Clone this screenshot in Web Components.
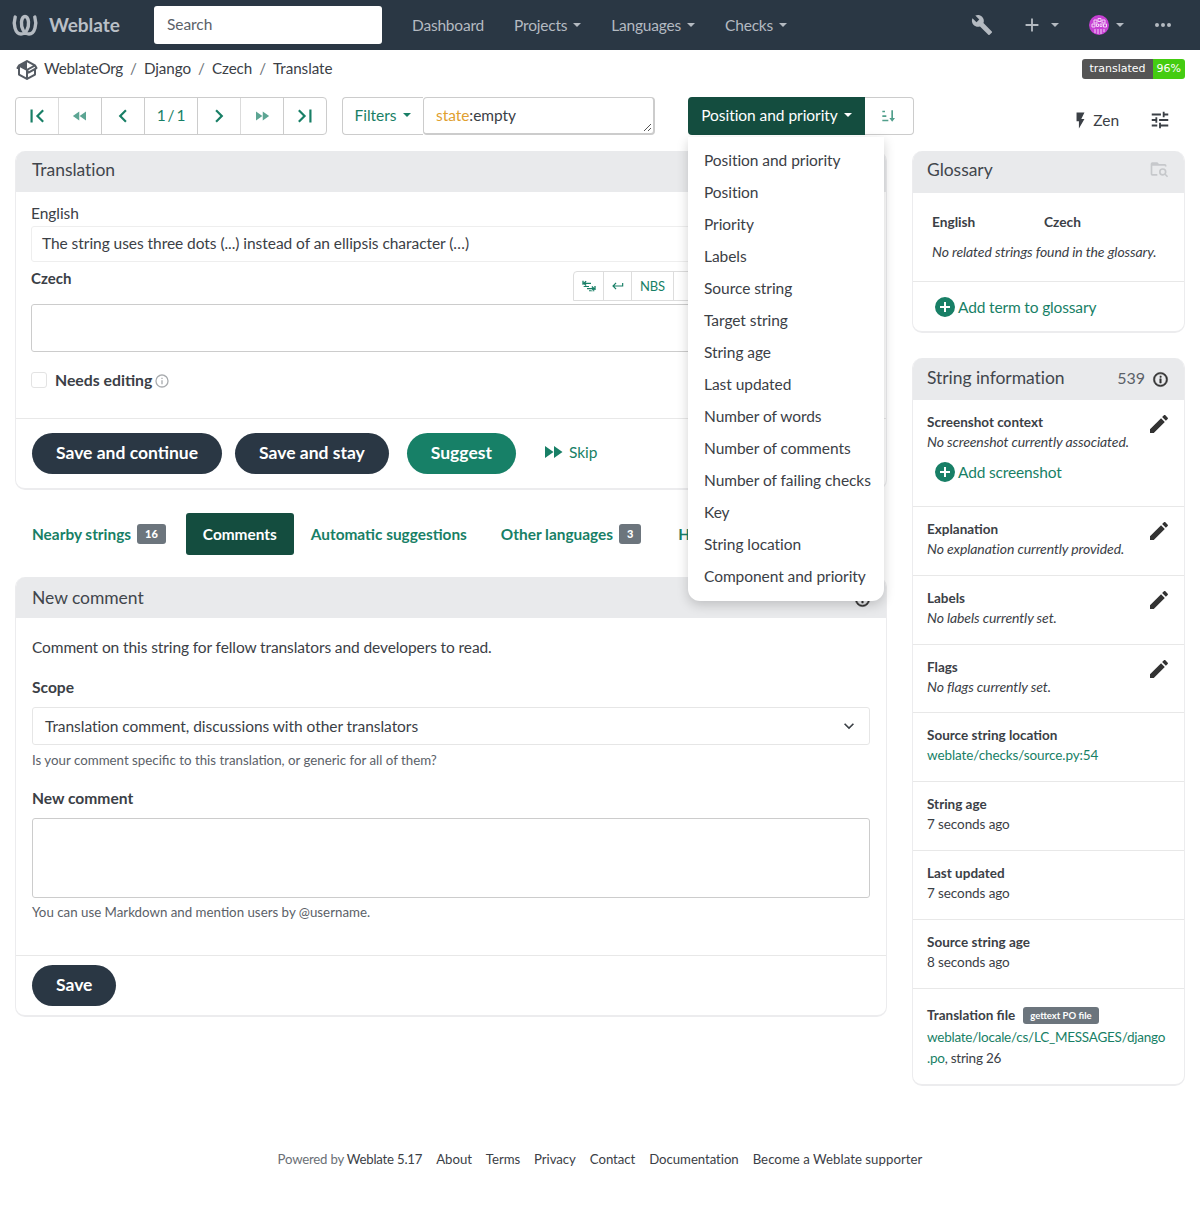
<!DOCTYPE html>
<html lang="en">
<head>
<meta charset="utf-8">
<title>Translate - Weblate</title>
<style>
  html, body { margin: 0; padding: 0; background: #fff; }
  body { font: 15.5px/20px Lato, "Noto Sans", sans-serif; letter-spacing: -.05px; color: #3b4046; overflow-x: hidden; }
</style>
</head>
<body>
<wl-app>
  <wl-navbar slot="nav"></wl-navbar>
  <wl-breadcrumbs slot="crumbs"></wl-breadcrumbs>
  <wl-toolbar slot="toolbar"></wl-toolbar>

  <wl-panel slot="left" heading="Translation" head="41" pad="16">
    <wl-translate-form></wl-translate-form>
  </wl-panel>
  <wl-tabs slot="left"></wl-tabs>
  <wl-panel slot="left" heading="New comment" head="41" pad="16" info>
    <wl-comment-form></wl-comment-form>
  </wl-panel>

  <wl-panel slot="right" heading="Glossary" head="42" pad="14" glossary>
    <wl-glossary></wl-glossary>
  </wl-panel>
  <wl-panel slot="right" heading="String information" head="42" pad="14" count="539">
    <wl-info-row label="Screenshot context" value="No screenshot currently associated." edit add="Add screenshot" height="106"></wl-info-row>
    <wl-info-row label="Explanation" value="No explanation currently provided." edit height="68"></wl-info-row>
    <wl-info-row label="Labels" value="No labels currently set." edit height="68"></wl-info-row>
    <wl-info-row label="Flags" value="No flags currently set." edit height="67"></wl-info-row>
    <wl-info-row label="Source string location" link="weblate/checks/source.py:54" height="68"></wl-info-row>
    <wl-info-row label="String age" plain="7 seconds ago" height="68"></wl-info-row>
    <wl-info-row label="Last updated" plain="7 seconds ago" height="68"></wl-info-row>
    <wl-info-row label="Source string age" plain="8 seconds ago" height="68"></wl-info-row>
    <wl-file-row></wl-file-row>
  </wl-panel>

  <wl-footer slot="footer"></wl-footer>
</wl-app>

<script>
const ICONS = {
  first: 'M18.41,16.59L13.82,12L18.41,7.41L17,6L11,12L17,18L18.41,16.59M6,6H8V18H6V6Z',
  last: 'M5.59,7.41L10.18,12L5.59,16.59L7,18L13,12L7,6L5.59,7.41M16,6H18V18H16V6Z',
  left: 'M15.41,16.58L10.83,12L15.41,7.41L14,6L8,12L14,18L15.41,16.58Z',
  right: 'M8.59,16.58L13.17,12L8.59,7.41L10,6L16,12L10,18L8.59,16.58Z',
  rewind: 'M11.5,12L20,18V6M11,18V6L2.5,12L11,18Z',
  forward: 'M13,6V18L21.5,12M4,18L12.5,12L4,6V18Z',
  wrench: 'M22.7,19L13.6,9.9C14.5,7.6 14,4.9 12.1,3C10.1,1 7.1,0.6 4.7,1.7L9,6L6,9L1.6,4.7C0.4,7.1 0.9,10.1 2.9,12.1C4.8,14 7.5,14.5 9.8,13.6L18.9,22.7C19.3,23.1 19.9,23.1 20.3,22.7L22.6,20.4C23.1,20 23.1,19.3 22.7,19Z',
  plus: 'M19,13H13V19H11V13H5V11H11V5H13V11H19V13Z',
  dots: 'M16,12A2,2 0 0,1 18,10A2,2 0 0,1 20,12A2,2 0 0,1 18,14A2,2 0 0,1 16,12M10,12A2,2 0 0,1 12,10A2,2 0 0,1 14,12A2,2 0 0,1 12,14A2,2 0 0,1 10,12M4,12A2,2 0 0,1 6,10A2,2 0 0,1 8,12A2,2 0 0,1 6,14A2,2 0 0,1 4,12Z',
  flash: 'M7,2V13H10V22L17,10H13L17,2H7Z',
  tune: 'M3,17V19H9V17H3M3,5V7H13V5H3M13,21V19H21V17H13V15H11V21H13M7,9V11H3V13H7V15H9V9H7M21,13V11H11V13H21M15,9H17V7H21V5H17V3H15V9Z',
  info: 'M11,9H13V7H11M12,20C7.59,20 4,16.41 4,12C4,7.59 7.59,4 12,4C16.41,4 20,7.59 20,12C20,16.41 16.41,20 12,20M12,2A10,10 0 0,0 2,12A10,10 0 0,0 12,22A10,10 0 0,0 22,12A10,10 0 0,0 12,2M11,17H13V11H11V17Z',
  pluscircle: 'M17,13H13V17H11V13H7V11H11V7H13V11H17M12,2A10,10 0 0,0 2,12A10,10 0 0,0 12,22A10,10 0 0,0 22,12A10,10 0 0,0 12,2Z',
  pencil: 'M20.71,7.04C21.1,6.65 21.1,6 20.71,5.63L18.37,3.29C18,2.9 17.35,2.9 16.96,3.29L15.12,5.12L18.87,8.87M3,17.25V21H6.75L17.81,9.93L14.06,6.18L3,17.25Z',
  enter: 'M19,7V11H5.83L9.41,7.41L8,6L2,12L8,18L9.41,16.58L5.83,13H21V7H19Z',
  chevrondown: 'M7.41,8.58L12,13.17L16.59,8.58L18,10L12,16L6,10L7.41,8.58Z',
  box: 'M2,10.96C1.5,10.68 1.35,10.07 1.63,9.59L3.13,7C3.24,6.8 3.41,6.66 3.6,6.58L11.43,2.18C11.59,2.06 11.79,2 12,2C12.21,2 12.41,2.06 12.57,2.18L20.47,6.62C20.66,6.72 20.82,6.88 20.91,7.08L22.36,9.6C22.64,10.08 22.47,10.69 22,10.96L21,11.54V16.5C21,16.88 20.79,17.21 20.47,17.38L12.57,21.82C12.41,21.94 12.21,22 12,22C11.79,22 11.59,21.94 11.43,21.82L3.53,17.38C3.21,17.21 3,16.88 3,16.5V10.96C2.7,11.13 2.32,11.14 2,10.96M12,4.15V10.85L17.96,7.5L12,4.15M5,15.91L11,19.29V12.58L5,9.21V15.91M19,15.91V12.69L14,15.59C13.67,15.77 13.3,15.76 13,15.6V19.29L19,15.91M13.85,13.36L20.13,9.73L19.55,8.72L13.27,12.35L13.85,13.36Z',
  sort: 'M2,4H6V6.500H2V4M2,11H8V13.500H2V11M2,17.500H11V20H2V17.500M15.500,3.500H18V15H21L16.750,20.500L12.500,15H15.500V3.500Z',
  tabs: 'M2,4H4V10H2V4M7,4L8.4,5.4L6.8,7H15V9H6.8L8.4,10.6L7,12L3,8M22,12H20V18H22V12M17,12L15.6,13.4L17.2,15H9V17H17.2L15.6,18.6L17,20L21,16M4,12H12V13.5H4M12,18.5H20V20H12Z',
  folder: 'M4,4H10L12,6H19A2,2 0 0,1 21,8V9H19V8H4V18H10V20H4A2,2 0 0,1 2,18V6A2,2 0 0,1 4,4M16.5,11A4.5,4.5 0 0,1 21,15.5C21,16.38 20.75,17.2 20.31,17.9L23,20.6L21.6,22L18.9,19.31C18.2,19.75 17.38,20 16.5,20A4.5,4.5 0 0,1 12,15.5A4.5,4.5 0 0,1 16.5,11M16.5,13A2.5,2.5 0 0,0 14,15.5A2.5,2.5 0 0,0 16.5,18A2.5,2.5 0 0,0 19,15.5A2.5,2.5 0 0,0 16.5,13Z'
};

class WlIcon extends HTMLElement {
  connectedCallback() {
    const size = this.getAttribute('size') || 24;
    this.attachShadow({ mode: 'open' });
    this.shadowRoot.innerHTML = `
      <style>
        :host { display: inline-flex; width: ${size}px; height: ${size}px; flex: none; }
        svg { width: 100%; height: 100%; fill: currentColor; stroke: currentColor; stroke-width: var(--icon-stroke, 0); display: block; }
      </style>
      <svg viewBox="0 0 24 24"><path d="${ICONS[this.getAttribute('name')]}"/></svg>`;
  }
}

class WlApp extends HTMLElement {
  connectedCallback() {
    this.attachShadow({ mode: 'open' });
    this.shadowRoot.innerHTML = `
      <style>
        :host { display: block; }
        .page { padding: 0 15px; }
        .columns { display: grid; grid-template-columns: 872px 273px; column-gap: 25px; margin-top: 16px; align-items: start; }
        .col { display: flex; flex-direction: column; }
        .right { gap: 25px; }
      </style>
      <slot name="nav"></slot>
      <div class="page">
        <slot name="crumbs"></slot>
        <slot name="toolbar"></slot>
        <div class="columns">
          <div class="col left"><slot name="left"></slot></div>
          <div class="col right"><slot name="right"></slot></div>
        </div>
        <slot name="footer"></slot>
      </div>`;
  }
}

class WlNavbar extends HTMLElement {
  connectedCallback() {
    this.attachShadow({ mode: 'open' });
    this.shadowRoot.innerHTML = `
      <style>
        :host { display: flex; align-items: center; height: 50px; background: #2a3744; color: #b4bac1; box-sizing: border-box; }
        .logo { width: 28px; height: 22px; margin-left: 11px; }
        .brand { font-size: 19px; font-weight: 700; margin-left: 10px; width: 105px; color: #b9bfc6; }
        .search { width: 228px; height: 38px; box-sizing: border-box; background: #fff; border-radius: 3px; padding: 0 13px 2px; display: flex; align-items: center; color: #5b6168; }
        nav { display: flex; margin-left: 15px; letter-spacing: -.2px; }
        nav span { padding: 0 15px; display: flex; align-items: center; white-space: nowrap; }
        .caret { width: 0; height: 0; border: 4px solid transparent; border-top-color: currentColor; border-bottom: 0; margin-left: 6px; }
        .tools { margin-left: auto; display: flex; align-items: center; }
        .wrench { margin-right: 28px; }
        .add { display: flex; align-items: center; margin-right: 30px; }
        .add .caret { margin-left: 8px; }
        .avatar { display: flex; align-items: center; margin-right: 27px; }
        .avatar svg { width: 20px; height: 20px; }
        .avatar .caret { margin-left: 7px; }
        .dots { margin-right: 25px; }
      </style>
      <svg class="logo" viewBox="0 0 28 22" fill="none" stroke="currentColor" stroke-linecap="round">
        <path d="M4.200 3C2 10 4 20 10 20C15 20 18 14 17.500 8C17 4 15.500 2.500 14 2.500C12.500 2.500 11 4 10.500 8C10 14 13 20 18 20C24 20 26 10 23.800 3" stroke-width="3.400"/>
      </svg>
      <span class="brand">Weblate</span>
      <div class="search">Search</div>
      <nav>
        <span>Dashboard</span>
        <span>Projects<i class="caret"></i></span>
        <span>Languages<i class="caret"></i></span>
        <span>Checks<i class="caret"></i></span>
      </nav>
      <div class="tools">
        <wl-icon class="wrench" name="wrench" size="22"></wl-icon>
        <div class="add"><wl-icon name="plus" size="22"></wl-icon><i class="caret"></i></div>
        <div class="avatar">
          <svg viewBox="0 0 20 20">
            <circle cx="10" cy="10" r="10" fill="#c741d4"/>
            <g fill="none" stroke="#f3d3f6" stroke-width="1">
              <path d="M5 5h3v3H5zM9 3.500h3v3H9zM13 5h3v3h-3zM3 9h3v3H3zM7.500 9h2v2.500h-2zM11 9h2v2.500h-2zM14.500 9h3v3h-3z"/>
              <path d="M6 14v4M9 14v5M12 14v5M15 14v3"/>
            </g>
          </svg>
          <i class="caret"></i>
        </div>
        <wl-icon class="dots" name="dots" size="24"></wl-icon>
      </div>`;
  }
}

class WlBreadcrumbs extends HTMLElement {
  connectedCallback() {
    this.attachShadow({ mode: 'open' });
    this.shadowRoot.innerHTML = `
      <style>
        :host { display: flex; align-items: center; height: 36px; color: #3b4046; font-size: 15.200px; }
        wl-icon { color: #555b63; margin: 4px 5px 0 0; }
        .org { letter-spacing: -.2px; }
        .sep { color: #6d7278; margin: 0 7px; }
        .badge { margin-left: auto; display: flex; height: 20px; border-radius: 3px; overflow: hidden; color: #fff; font: 11px/20px "DejaVu Sans", sans-serif; letter-spacing: 0; margin-top: 2px; }
        .badge b { font-weight: 400; background: #555; padding: 0 7px; }
        .badge i { font-style: normal; background: #4c1; padding: 0 4px; }
      </style>
      <wl-icon name="box" size="24"></wl-icon>
      <span class="org">WeblateOrg</span><span class="sep">/</span><span>Django</span><span class="sep">/</span><span>Czech</span><span class="sep">/</span><span>Translate</span>
      <div class="badge"><b>translated</b><i>96%</i></div>`;
  }
}

class WlToolbar extends HTMLElement {
  connectedCallback() {
    this.attachShadow({ mode: 'open' });
    this.shadowRoot.innerHTML = `
      <style>
        :host { display: flex; align-items: flex-start; margin-top: 11px; height: 38px; color: #187f66; position: relative; z-index: 5; }
        .group { display: flex; height: 38px; box-sizing: border-box; border: 1px solid #ccc; border-radius: 4px; }
        .group > span { width: 43px; display: flex; align-items: center; justify-content: center; border-left: 1px solid #ccc; box-sizing: border-box; }
        .group > span:first-child { border-left: 0; width: 42px; }
        .group > span.count { width: 53px; word-spacing: -2px; padding-bottom: 2px; }
        .group > span.dim { opacity: .7; }
        .filters { margin-left: 15px; width: 81px; box-sizing: border-box; border: 1px solid #ccc; border-radius: 4px 0 0 4px; border-right: 0; height: 38px; display: flex; align-items: center; justify-content: center; padding-bottom: 2px; }
        .caret { width: 0; height: 0; border: 4px solid transparent; border-top-color: currentColor; border-bottom: 0; margin-left: 7px; }
        .query { width: 232px; height: 38px; box-sizing: border-box; border: 1px solid #ccc; border-right-width: 2px; border-bottom-width: 2px; border-radius: 4px; padding: 0 12px 1px; display: flex; align-items: center; color: #3b4046; position: relative; }
        .query em { font-style: normal; color: #e0a030; }
        .query svg { position: absolute; right: 1px; bottom: 1px; width: 9px; height: 9px; }
        .sort-btn { width: 177px; height: 38px; box-sizing: border-box; padding-bottom: 2px; background: #144d3f; color: #fff; border-radius: 4px 0 0 4px; display: flex; align-items: center; justify-content: center; }
        .sort-btn .caret { margin-left: 6px; }
        .sort-dir { width: 49px; height: 38px; box-sizing: border-box; border: 1px solid #ccc; border-left: 0; border-radius: 0 4px 4px 0; display: flex; align-items: center; justify-content: center; }
        .sort-dir wl-icon { opacity: .75; }
        .sort-wrap { display: flex; margin-left: 33px; }
        .right { margin-left: auto; display: flex; align-items: center; color: #3b4046; height: 46px; }
        .zen { display: flex; align-items: center; gap: 3px; margin-right: 30px; }
        .tune { margin-right: 14px; }
        wl-sort-menu { position: absolute; left: 673px; top: 40px; }
      </style>
      <div class="group">
        <span><wl-icon name="first" size="26"></wl-icon></span>
        <span class="dim"><wl-icon name="rewind" size="18"></wl-icon></span>
        <span><wl-icon name="left" size="26"></wl-icon></span>
        <span class="count">1 / 1</span>
        <span><wl-icon name="right" size="26"></wl-icon></span>
        <span class="dim"><wl-icon name="forward" size="18"></wl-icon></span>
        <span><wl-icon name="last" size="26"></wl-icon></span>
      </div>
      <div class="filters">Filters<i class="caret"></i></div>
      <div class="query"><span><em>state</em>:empty</span>
        <svg viewBox="0 0 9 9" stroke="#555" fill="none"><path d="M1 8L8 1M5 8L8 5"/></svg>
      </div>
      <div class="sort-wrap">
        <div class="sort-btn">Position and priority<i class="caret"></i></div>
        <div class="sort-dir"><wl-icon name="sort" size="16"></wl-icon></div>
      </div>
      <div class="right">
        <div class="zen"><wl-icon name="flash" size="19"></wl-icon>Zen</div>
        <wl-icon class="tune" name="tune" size="22"></wl-icon>
      </div>
      <wl-sort-menu></wl-sort-menu>`;
  }
}

class WlSortMenu extends HTMLElement {
  connectedCallback() {
    const items = ['Position and priority', 'Position', 'Priority', 'Labels', 'Source string', 'Target string', 'String age', 'Last updated', 'Number of words', 'Number of comments', 'Number of failing checks', 'Key', 'String location', 'Component and priority'];
    this.attachShadow({ mode: 'open' });
    this.shadowRoot.innerHTML = `
      <style>
        :host { display: block; width: 196px; box-sizing: border-box; background: #fff; border-radius: 0 0 12px 12px; padding: 7px 0 9px; box-shadow: 0 4px 12px rgba(0,0,0,.18); color: #3b4046; }
        div { height: 32px; line-height: 32px; padding-left: 16px; white-space: nowrap; }
      </style>
      ${items.map(i => `<div>${i}</div>`).join('')}`;
  }
}

class WlPanel extends HTMLElement {
  connectedCallback() {
    const count = this.getAttribute('count');
    let extra = '';
    if (count) extra = `<span class="count">${count}</span><wl-icon class="dark" name="info" size="17"></wl-icon>`;
    if (this.hasAttribute('info')) extra = `<wl-icon class="dark" name="info" size="17"></wl-icon>`;
    if (this.hasAttribute('glossary')) extra = `<wl-icon class="folder" name="folder" size="20"></wl-icon>`;
    this.attachShadow({ mode: 'open' });
    this.shadowRoot.innerHTML = `
      <style>
        :host { display: block; box-sizing: border-box; border: 1px solid #ececee; border-bottom-width: 2px; border-top: 0; border-radius: 10px; background: #fff; overflow: hidden; }
        :host([glossary]) header { padding-bottom: 5px; }
        :host([info]) header { padding-bottom: 0; }
        header { height: ${this.getAttribute('head')}px; box-sizing: border-box; background: #e9eaec; display: flex; align-items: center; padding: 0 15px 3px ${this.getAttribute('pad')}px; font-size: 17.500px; color: #41464c; }
        header > div { margin-left: auto; display: flex; align-items: center; }
        .count { font-size: 16px; color: #5b6168; margin-right: 7px; margin-top: 1px; }
        .dark { color: #333; --icon-stroke: .8px; margin-top: 3px; }
        .folder { color: #c6c8cb; margin: -1px 0 1px 0; }
      </style>
      <header>${this.getAttribute('heading')}<div>${extra}</div></header>
      <slot></slot>`;
  }
}

class WlButton extends HTMLElement {
  connectedCallback() {
    this.attachShadow({ mode: 'open' });
    this.shadowRoot.innerHTML = `
      <style>
        :host { display: inline-flex; align-items: center; justify-content: center; height: 41px; padding: 0 24px 1px; border-radius: 21px; color: #fff; background: var(--btn, #2a3744); font-size: 17.500px; font-weight: 700; letter-spacing: 0; white-space: nowrap; box-sizing: border-box; }
      </style>
      <slot></slot>`;
  }
}

class WlTranslateForm extends HTMLElement {
  connectedCallback() {
    this.attachShadow({ mode: 'open' });
    this.shadowRoot.innerHTML = `
      <style>
        :host { display: block; color: #3b4046; }
        .top { padding: 11px 15px 0; height: 226px; box-sizing: border-box; }
        .source { height: 36px; box-sizing: border-box; border: 1px solid #eee; margin-top: 3px; padding: 0 10px; line-height: 33px; border-radius: 3px; white-space: nowrap; }
        .czech { height: 42px; position: relative; }
        .czech b { display: block; padding-top: 6px; font-size: 15px; letter-spacing: 0; }
        .tools { position: absolute; left: 542px; top: 9px; height: 30px; display: flex; border: 1px solid #ddd; border-radius: 4px 4px 0 0; box-sizing: border-box; color: #187f66; font-size: 13px; }
        .tools span { display: flex; align-items: center; justify-content: center; border-left: 1px solid #ddd; box-sizing: border-box; }
        .tools span:first-child { border-left: 0; width: 29px; }
        .tools span:nth-child(2) { width: 28px; }
        .tools span:nth-child(3) { width: 42px; }
        .tools span:nth-child(4) { width: 40px; }
        .field { height: 48px; box-sizing: border-box; border: 1px solid #ccc; border-radius: 3px; }
        .needs { display: flex; align-items: center; margin-top: 18px; font-weight: 700; font-size: 15.800px; letter-spacing: 0; }
        .check { width: 16px; height: 16px; box-sizing: border-box; border: 1px solid #e3e3e3; border-radius: 3px; margin-right: 8px; }
        .needs wl-icon { color: #a8abae; margin: 1px 0 0 2px; }
        .actions { border-top: 1px solid #e8e8e8; height: 70px; box-sizing: border-box; padding: 14px 16px; display: flex; gap: 13px; align-items: flex-start; }
        .suggest { --btn: #178067; margin-left: 5px; }
        .skip { display: flex; align-items: center; height: 38px; color: #187f66; margin-left: 12px; gap: 4px; }
      </style>
      <div class="top">
        <div>English</div>
        <div class="source">The string uses three dots (...) instead of an ellipsis character (…)</div>
        <div class="czech">
          <b>Czech</b>
          <div class="tools"><span><wl-icon name="tabs" size="16"></wl-icon></span><span><wl-icon name="enter" size="14"></wl-icon></span><span>NBS</span><span>…</span></div>
        </div>
        <div class="field"></div>
        <div class="needs"><i class="check"></i>Needs editing<wl-icon name="info" size="16"></wl-icon></div>
      </div>
      <div class="actions">
        <wl-button>Save and continue</wl-button>
        <wl-button>Save and stay</wl-button>
        <wl-button class="suggest">Suggest</wl-button>
        <div class="skip"><wl-icon name="forward" size="24"></wl-icon>Skip</div>
      </div>`;
  }
}

class WlTabs extends HTMLElement {
  connectedCallback() {
    this.attachShadow({ mode: 'open' });
    this.shadowRoot.innerHTML = `
      <style>
        :host { display: flex; height: 42px; margin: 23px 0 22px; color: #187f66; font-weight: 700; font-size: 15.400px; letter-spacing: 0; white-space: nowrap; }
        span { display: flex; align-items: center; padding: 0 17px; border-radius: 3px; }
        span.on { background: #144d3f; color: #fff; }
        b { background: #6c757d; color: #fff; font-size: 11px; line-height: 20px; padding: 0 8px; border-radius: 3px; margin-left: 6px; }
        .gap { margin-right: 3px; }
      </style>
      <span class="gap">Nearby strings<b>16</b></span>
      <span class="on">Comments</span>
      <span>Automatic suggestions</span>
      <span class="gap">Other languages<b>3</b></span>
      <span>History</span>`;
  }
}

class WlCommentForm extends HTMLElement {
  connectedCallback() {
    this.attachShadow({ mode: 'open' });
    this.shadowRoot.innerHTML = `
      <style>
        :host { display: block; color: #3b4046; }
        .body { padding: 19px 16px 0; height: 337px; box-sizing: border-box; }
        .intro { letter-spacing: -.1px; }
        .label { font-weight: 700; font-size: 15.600px; letter-spacing: 0; }
        .scope { margin-top: 20px; }
        .select { display: flex; align-items: center; justify-content: space-between; height: 38px; box-sizing: border-box; border: 1px solid #e6e6e6; border-radius: 3px; padding: 0 10px 0 12px; margin-top: 10px; }
        .help { font-size: 13.300px; letter-spacing: 0; color: #5b6168; margin-top: 5px; }
        .next { margin-top: 18px; }
        .area { height: 80px; box-sizing: border-box; border: 1px solid #ccc; border-radius: 3px; margin-top: 10px; }
        .area + .help { margin-top: 4px; }
        .foot { border-top: 1px solid #e8e8e8; padding: 9px 16px; height: 60px; box-sizing: border-box; }
      </style>
      <div class="body">
        <div class="intro">Comment on this string for fellow translators and developers to read.</div>
        <div class="label scope">Scope</div>
        <div class="select">Translation comment, discussions with other translators<wl-icon name="chevrondown" size="20"></wl-icon></div>
        <div class="help">Is your comment specific to this translation, or generic for all of them?</div>
        <div class="label next">New comment</div>
        <div class="area"></div>
        <div class="help">You can use Markdown and mention users by @username.</div>
      </div>
      <div class="foot"><wl-button>Save</wl-button></div>`;
  }
}

class WlGlossary extends HTMLElement {
  connectedCallback() {
    this.attachShadow({ mode: 'open' });
    this.shadowRoot.innerHTML = `
      <style>
        :host { display: block; font-size: 14px; }
        .top { height: 89px; box-sizing: border-box; padding: 19px 19px 0; border-bottom: 1px solid #e8e8e8; }
        .head { display: flex; font-weight: 700; font-size: 13.700px; letter-spacing: 0; }
        .head span:first-child { width: 112px; }
        em { display: block; margin-top: 10px; white-space: nowrap; letter-spacing: -.1px; }
        .add { height: 49px; display: flex; align-items: center; padding-left: 20px; color: #187f66; font-size: 15.500px; gap: 1px; letter-spacing: -.15px; }
      </style>
      <div class="top">
        <div class="head"><span>English</span><span>Czech</span></div>
        <em>No related strings found in the glossary.</em>
      </div>
      <div class="add"><wl-icon name="pluscircle" size="24"></wl-icon>Add term to glossary</div>`;
  }
}

class WlInfoRow extends HTMLElement {
  connectedCallback() {
    const get = n => this.getAttribute(n);
    let content = '';
    if (get('value')) content += `<em>${get('value')}</em>`;
    if (get('plain')) content += `<div class="val">${get('plain')}</div>`;
    if (get('link')) content += `<div class="val link">${get('link')}</div>`;
    if (get('add')) content += `<div class="add"><wl-icon name="pluscircle" size="24"></wl-icon>${get('add')}</div>`;
    this.attachShadow({ mode: 'open' });
    this.shadowRoot.innerHTML = `
      <style>
        :host { display: block; position: relative; border-bottom: 1px solid #e8e8e8; padding: 12px 14px 0; box-sizing: border-box; height: ${+get('height') + 1}px; font-size: 13.500px; letter-spacing: -.1px; }
        .label { font-weight: 700; letter-spacing: 0; }
        em, .val { display: block; white-space: nowrap; }
        em { font-size: 14px; }
        .link { color: #187f66; }
        .add { display: flex; align-items: center; gap: 1px; color: #187f66; font-size: 15.500px; letter-spacing: -.15px; margin: 8px 0 0 6px; }
        .pen { position: absolute; right: 13px; top: 12px; color: #333; }
      </style>
      <div class="label">${get('label')}</div>
      ${content}
      ${this.hasAttribute('edit') ? '<wl-icon class="pen" name="pencil" size="24"></wl-icon>' : ''}`;
  }
}

class WlFileRow extends HTMLElement {
  connectedCallback() {
    this.attachShadow({ mode: 'open' });
    this.shadowRoot.innerHTML = `
      <style>
        :host { display: block; padding: 16px 14px 0; height: 95px; box-sizing: border-box; font-size: 13.500px; line-height: 21px; letter-spacing: -.1px; }
        .label { font-weight: 700; letter-spacing: 0; display: flex; align-items: center; gap: 8px; }
        .tag { background: #6c757d; color: #fff; font-size: 9.500px; font-weight: 700; line-height: 17px; padding: 0 7px; border-radius: 3px; }
        .path { margin-top: 1px; white-space: nowrap; letter-spacing: -.24px; }
        span.g { color: #187f66; }
      </style>
      <div class="label">Translation file<span class="tag">gettext PO file</span></div>
      <div class="path"><span class="g">weblate/locale/cs/LC_MESSAGES/django<br>.po</span>, string 26</div>`;
  }
}

class WlFooter extends HTMLElement {
  connectedCallback() {
    this.attachShadow({ mode: 'open' });
    this.shadowRoot.innerHTML = `
      <style>
        :host { display: flex; justify-content: center; gap: 14px; margin-top: 63px; height: 59px; font-size: 13.200px; color: #3b4046; white-space: nowrap; }
        i { font-style: normal; color: #6b7076; }
        .by { letter-spacing: -.2px; }
        .last { letter-spacing: .05px; }
      </style>
      <span class="by"><i>Powered by</i> Weblate 5.17</span><span>About</span><span>Terms</span><span>Privacy</span><span>Contact</span><span>Documentation</span><span class="last">Become a Weblate supporter</span>`;
  }
}

customElements.define('wl-icon', WlIcon);
customElements.define('wl-app', WlApp);
customElements.define('wl-navbar', WlNavbar);
customElements.define('wl-breadcrumbs', WlBreadcrumbs);
customElements.define('wl-toolbar', WlToolbar);
customElements.define('wl-sort-menu', WlSortMenu);
customElements.define('wl-panel', WlPanel);
customElements.define('wl-button', WlButton);
customElements.define('wl-translate-form', WlTranslateForm);
customElements.define('wl-tabs', WlTabs);
customElements.define('wl-comment-form', WlCommentForm);
customElements.define('wl-glossary', WlGlossary);
customElements.define('wl-info-row', WlInfoRow);
customElements.define('wl-file-row', WlFileRow);
customElements.define('wl-footer', WlFooter);
</script>
</body>
</html>
